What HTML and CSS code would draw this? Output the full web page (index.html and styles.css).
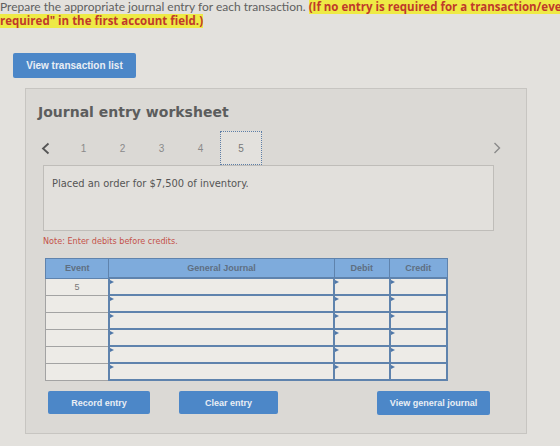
FILE: index.html
```html
<!DOCTYPE html>
<html lang="en">
<head>
    <meta charset="UTF-8">
    <meta name="viewport" content="width=device-width, initial-scale=1.0">
    <title>Journal entry worksheet</title>
    <link rel="stylesheet" href="styles.css">
</head>
<body>
    <p class="prompt">
        <span class="line">Prepare the appropriate journal entry for each transaction. <mark>(If no entry is required for a transaction/event, select "No Journal Entry</mark></span>
        <span class="line"><mark>required" in the first account field.)</mark></span>
    </p>

    <button class="btn btn-list">View transaction list</button>

    <!-- Worksheet panel -->
    <section class="worksheet">
        <h2>Journal entry worksheet</h2>

        <nav class="steps">
            <span class="arrow prev">
                <svg width="9" height="13" viewBox="0 0 9 13"><path d="M7.5 1.5 L2 6.5 L7.5 11.5" fill="none" stroke="#555" stroke-width="1.8"/></svg>
            </span>
            <span class="step">1</span>
            <span class="step">2</span>
            <span class="step">3</span>
            <span class="step">4</span>
            <span class="step current">5</span>
            <span class="arrow next">
                <svg width="8" height="12" viewBox="0 0 8 12"><path d="M1.5 1 L6.5 6 L1.5 11" fill="none" stroke="#8a8a8a" stroke-width="1.4"/></svg>
            </span>
        </nav>

        <div class="description">Placed an order for $7,500 of inventory.</div>

        <p class="note">Note: Enter debits before credits.</p>

        <table class="journal">
            <thead>
                <tr>
                    <th class="col-event">Event</th>
                    <th class="col-account">General Journal</th>
                    <th class="col-amount">Debit</th>
                    <th class="col-amount">Credit</th>
                </tr>
            </thead>
            <tbody>
                <tr><td class="event">5</td><td class="field"></td><td class="field"></td><td class="field"></td></tr>
                <tr><td class="event"></td><td class="field"></td><td class="field"></td><td class="field"></td></tr>
                <tr><td class="event"></td><td class="field"></td><td class="field"></td><td class="field"></td></tr>
                <tr><td class="event"></td><td class="field"></td><td class="field"></td><td class="field"></td></tr>
                <tr><td class="event"></td><td class="field"></td><td class="field"></td><td class="field"></td></tr>
                <tr><td class="event"></td><td class="field"></td><td class="field"></td><td class="field"></td></tr>
            </tbody>
        </table>

        <div class="actions">
            <button class="btn btn-record">Record entry</button>
            <button class="btn btn-clear">Clear entry</button>
            <button class="btn btn-journal">View general journal</button>
        </div>
    </section>
</body>
</html>
```

FILE: styles.css
```css
/* Page */
html {
    overflow: hidden;
}
body {
    margin: 0;
    background: #e3e1dd;
    font-family: Lato, "Open Sans", Arial, sans-serif;
    color: #606060;
}

/* Instructions */
.prompt {
    margin: 0;
    padding: 0;
    font-size: 12px;
    line-height: 14px;
    white-space: nowrap;
}
.prompt .line {
    display: block;
    height: 14px;
}
.prompt mark {
    display: inline-block;
    line-height: 14px;
    vertical-align: top;
    background: #eeea45;
    color: #c0392b;
    font-family: "Open Sans", Arial, sans-serif;
    font-size: 11.5px;
    font-weight: bold;
}

/* Buttons */
.btn {
    display: block;
    border: none;
    border-radius: 2px;
    background: #4c87c8;
    color: #e9eef5;
    font-family: "Liberation Sans", Arial, sans-serif;
    font-weight: bold;
    font-size: 9px;
    padding: 0;
    cursor: pointer;
}
.btn-list {
    margin: 25px 0 0 13px;
    width: 123px;
    height: 25px;
    font-size: 10px;
}

/* Worksheet panel */
.worksheet {
    margin: 10px 0 0 25px;
    width: 500px;
    height: 344px;
    background: #dbd9d5;
    border: 1px solid #c7c5c1;
    padding: 0;
}
.worksheet h2 {
    margin: 14px 0 0 12px;
    font-family: "DejaVu Sans", Verdana, sans-serif;
    font-size: 14px;
    line-height: 18px;
    color: #5c5d5d;
}

/* Step navigation */
.steps {
    display: flex;
    align-items: center;
    margin: 10px 0 0 12px;
    width: 465px;
    height: 34px;
}
.arrow {
    display: flex;
    align-items: center;
}
.prev {
    width: 26px;
    padding-left: 3px;
    box-sizing: border-box;
}
.next {
    margin-left: auto;
    padding-right: 2px;
}
.step {
    width: 39px;
    height: 34px;
    display: flex;
    align-items: center;
    justify-content: center;
    font-family: "Liberation Sans", Arial, sans-serif;
    font-size: 10px;
    color: #8a8a8a;
    box-sizing: border-box;
}
.step:first-of-type {
    width: 43px;
    padding-left: 8px;
}
.step.current {
    width: 42px;
    border: 1px dotted #5d7ea6;
    background: #e3e1dd;
    color: #777;
}

/* Transaction description */
.description {
    margin: 0 0 0 17px;
    width: 451px;
    height: 66px;
    box-sizing: border-box;
    border: 1px solid #bfbdb9;
    background: #e2e0dc;
    padding: 11px 0 0 8px;
    font-family: "DejaVu Sans Condensed", "DejaVu Sans", Verdana, sans-serif;
    font-size: 11px;
    color: #555;
}

.note {
    margin: 5px 0 0 17px;
    font-family: "DejaVu Sans Condensed", "DejaVu Sans", Verdana, sans-serif;
    font-size: 9px;
    color: #c4524a;
}

/* Journal table */
.journal {
    margin: 12px 0 0 19px;
    width: 403px;
    border-collapse: collapse;
    font-family: "Liberation Sans", Arial, sans-serif;
}
.journal th {
    height: 18px;
    padding: 0;
    background: #7eabdc;
    border: 1px solid #5f83ad;
    font-size: 9px;
    font-weight: bold;
    color: #5f6f82;
}
.col-event { width: 63px; }
.col-account { width: 228px; }
.col-amount { width: 55px; }
.journal th:last-child { width: 57px; }

.journal td {
    height: 15px;
    padding: 0;
    background: #edebe7;
}
.journal td.event {
    border: 1px solid #a3a3a3;
    text-align: center;
    font-size: 9px;
    color: #777;
}
.journal td.field {
    position: relative;
    border: 2px solid #5f83ad;
}
/* little dropdown marker in the corner of each input */
.journal td.field::before {
    content: "";
    position: absolute;
    left: 0;
    top: 1px;
    border-left: 4px solid #4f77a8;
    border-top: 2px solid transparent;
    border-bottom: 2px solid transparent;
}

/* Bottom actions */
.actions {
    display: flex;
    margin: 10px 0 0 22px;
}
.btn-record {
    width: 102px;
    height: 23px;
}
.btn-clear {
    margin-left: 29px;
    width: 99px;
    height: 23px;
}
.btn-journal {
    margin-left: 99px;
    width: 113px;
    height: 24px;
}
```
